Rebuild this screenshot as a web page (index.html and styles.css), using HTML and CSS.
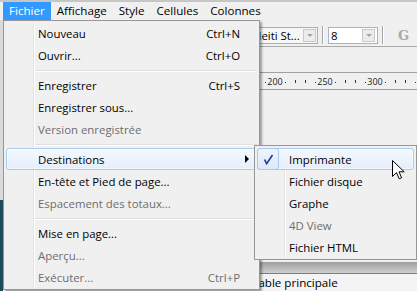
FILE: index.html
```html
<!DOCTYPE html>
<html lang="fr">
<head>
    <meta charset="UTF-8">
    <title>Fichier</title>
    <link rel="stylesheet" href="styles.css">
</head>
<body>
    <nav class="menubar">
        <span class="mb-item open">Fichier</span>
        <span class="mb-item">Affichage</span>
        <span class="mb-item">Style</span>
        <span class="mb-item">Cellules</span>
        <span class="mb-item">Colonnes</span>
    </nav>

    <div class="app">
        <div class="frame-left"></div>
        <div class="workspace">
            <div class="toolbar">
                <div class="combo combo-font">
                    <span class="combo-text">Heiti St...</span>
                    <span class="drop"></span>
                </div>
                <span class="tsep"></span>
                <div class="combo combo-size">
                    <span class="combo-text">8</span>
                    <span class="drop"></span>
                </div>
                <span class="tsep"></span>
                <span class="tbtn bold">G</span>
                <span class="tbtn italic">I</span>
            </div>

            <div class="ruler">
                <div class="rcell"><span class="dot"></span><span class="num">200</span><span class="dot"></span><span class="tick"></span><span class="tick"></span></div>
                <div class="rcell"><span class="dot"></span><span class="num">250</span><span class="dot"></span><span class="tick"></span><span class="tick"></span></div>
                <div class="rcell"><span class="dot"></span><span class="num">300</span><span class="dot"></span><span class="tick"></span><span class="tick"></span></div>
                <div class="rcell last"><span class="dot"></span></div>
            </div>

            <div class="canvas"></div>
            <div class="hscroll"></div>
            <div class="tabs"><span class="tab">Table principale</span></div>
        </div>
    </div>

    <!-- menu Fichier -->
    <div class="menu main-menu">
        <div class="mi"><span>Nouveau</span><span class="key">Ctrl+N</span></div>
        <div class="mi"><span>Ouvrir...</span><span class="key">Ctrl+O</span></div>
        <div class="msep"></div>
        <div class="mi"><span>Enregistrer</span><span class="key">Ctrl+S</span></div>
        <div class="mi"><span>Enregistrer sous...</span></div>
        <div class="mi off"><span>Version enregistrée</span></div>
        <div class="msep"></div>
        <div class="mi hot sub"><span>Destinations</span><span class="arrow"></span></div>
        <div class="mi"><span>En-tête et Pied de page...</span></div>
        <div class="mi off"><span>Espacement des totaux...</span></div>
        <div class="msep"></div>
        <div class="mi"><span>Mise en page...</span></div>
        <div class="mi off"><span>Aperçu...</span></div>
        <div class="mi off"><span>Exécuter...</span><span class="key">Ctrl+P</span></div>
    </div>

    <!-- sous-menu Destinations -->
    <div class="menu sub-menu">
        <div class="mi hot">
            <span class="check">
                <svg width="20" height="20" viewBox="0 0 20 20"><path d="M6.5 10.5 L8.6 14.6 L14.5 6" fill="none" stroke="#1c3d96" stroke-width="1.6"/></svg>
            </span>
            <span>Imprimante</span>
        </div>
        <div class="mi"><span>Fichier disque</span></div>
        <div class="mi"><span>Graphe</span></div>
        <div class="mi off"><span>4D View</span></div>
        <div class="mi"><span>Fichier HTML</span></div>
    </div>

    <svg class="cursor" width="13" height="20" viewBox="0 0 13 20">
        <path d="M0.5 0.5 L0.5 16.5 L4.5 12.6 L7.2 18.8 L9.6 17.8 L7 11.8 L12.2 11.8 Z" fill="#fff" stroke="#000" stroke-width="1"/>
    </svg>
</body>
</html>
```

FILE: styles.css
```css
body {
    margin: 0;
    width: 417px;
    height: 291px;
    overflow: hidden;
    position: relative;
    background: #f0f0f0;
    font-family: "Open Sans", "Noto Sans", sans-serif;
    font-size: 11.4px;
    color: #000;
}

/* barre de menus */
.menubar {
    display: flex;
    height: 18px;
    padding-left: 3px;
    border-top: 2px solid #c6c6c6;
    background: #f0f0f0;
}

.mb-item {
    padding: 0 6px;
    line-height: 18px;
    font-size: 11.6px;
    white-space: nowrap;
}

.mb-item.open {
    background: #3399ff;
    color: #fff;
}

/* fenêtre derrière le menu */
.app {
    display: flex;
    height: 271px;
}

.frame-left {
    width: 3px;
    background: linear-gradient(#dadada 0, #dadada 180px, #1d4d5a 180px);
}

.workspace {
    flex: 1;
    display: flex;
    flex-direction: column;
    min-width: 0;
}

.toolbar {
    display: flex;
    align-items: center;
    height: 27px;
    box-sizing: border-box;
    padding: 4px 0 0 247px;
    border-bottom: 1px solid #a9a9a9;
    overflow: hidden;
}

.combo {
    display: flex;
    align-items: center;
    flex-shrink: 0;
    height: 17px;
    box-sizing: border-box;
    border: 1px solid #abadb3;
    background: #f7f7f7;
}

.combo-font {
    width: 68px;
}

.combo-size {
    width: 50px;
    background: #fff;
    border-color: #a3b3cc;
}

.combo-text {
    flex: 1;
    padding-left: 2px;
    white-space: nowrap;
    overflow: hidden;
}

.drop {
    position: relative;
    width: 13px;
    height: 13px;
    margin-right: 1px;
    box-sizing: border-box;
    border: 1px solid #c9c9c9;
    background: #ececec;
}

.drop::after {
    content: "";
    position: absolute;
    left: 3px;
    top: 4px;
    border-top: 3px solid #a4a4a4;
    border-left: 3px solid transparent;
    border-right: 3px solid transparent;
}

.combo-size .drop {
    margin-right: 2px;
}

.tsep {
    flex-shrink: 0;
    width: 1px;
    height: 18px;
    margin: 0 4px;
    background: #a7a7a7;
    border-right: 1px solid #fff;
}

.tbtn {
    color: #a9a9a9;
    font-size: 13px;
}

.tbtn.bold {
    margin-left: 10px;
    font-family: "DejaVu Serif", serif;
    font-weight: bold;
}

.tbtn.italic {
    margin-left: 10px;
    font-family: "DejaVu Serif", serif;
    font-style: italic;
}

/* règle */
.ruler {
    display: flex;
    height: 18px;
    box-sizing: border-box;
    margin-top: 25px;
    padding-left: 257px;
    border-top: 1px solid #a0a0a0;
    border-bottom: 1px solid #a0a0a0;
    font-size: 9px;
    color: #222;
    overflow: hidden;
}

.rcell {
    display: flex;
    flex-shrink: 0;
    width: 50px;
}

.rcell.last {
    width: 10px;
}

.rcell > span {
    display: flex;
    justify-content: center;
    align-items: center;
    width: 10px;
}

.dot::before {
    content: "";
    width: 1px;
    height: 1px;
    margin-top: 2px;
    background: #333;
}

.tick::before {
    content: "";
    width: 1px;
    height: 3px;
    margin-top: 1px;
    background: #333;
}

.num {
    white-space: nowrap;
}

.canvas {
    flex: 1;
}

.hscroll {
    height: 11px;
    background: linear-gradient(#9e9e9e, #cfcfcf);
    border-bottom: 1px solid #7d7d7d;
}

.tabs {
    height: 17px;
    padding-left: 249px;
    background: #f4f4f4;
}

.tab {
    line-height: 17px;
    font-size: 11.6px;
    white-space: nowrap;
}

/* menus déroulants */
.menu {
    position: absolute;
    box-sizing: border-box;
    border: 1px solid #979797;
    background: #f0f0f0;
    box-shadow: 2px 2px 2px rgba(0, 0, 0, 0.35);
}

.menu::before {
    content: "";
    position: absolute;
    left: 29px;
    top: 1px;
    bottom: 1px;
    width: 1px;
    background: #e2e3e3;
    border-right: 1px solid #fff;
}

.main-menu {
    left: 3px;
    top: 20px;
    width: 257px;
    padding: 1px 2px;
}

.sub-menu {
    left: 254px;
    top: 145px;
    width: 163px;
    padding: 2px 2px 1px;
    box-shadow: none;
}

.mi {
    position: relative;
    display: flex;
    align-items: center;
    height: 22px;
    box-sizing: border-box;
    padding: 0 16px 0 31px;
    border: 1px solid transparent;
    border-radius: 3px;
    white-space: nowrap;
}

.mi .key {
    margin-left: auto;
}

.mi.off {
    color: #6d6d6d;
}

.mi.hot {
    border-color: #a8c9f0;
    background: linear-gradient(#f4f8fe, #e4eefb);
    box-shadow: inset 0 0 0 1px rgba(255, 255, 255, 0.5);
}

.arrow {
    position: absolute;
    right: 7px;
    top: 6px;
    border-left: 4px solid #000;
    border-top: 4px solid transparent;
    border-bottom: 4px solid transparent;
}

.check {
    position: absolute;
    left: -1px;
    top: -1px;
    width: 22px;
    height: 22px;
    box-sizing: border-box;
    border: 1px solid #a8c9f0;
    border-radius: 3px;
    background: linear-gradient(#eef4fd, #dde9fa);
}

.check svg {
    display: block;
}

.msep {
    position: relative;
    height: 8px;
}

.msep::after {
    content: "";
    position: absolute;
    left: 29px;
    right: 0;
    top: 4px;
    height: 0;
    border-top: 1px solid #e0e0e0;
    border-bottom: 1px solid #fff;
}

.cursor {
    position: absolute;
    left: 392px;
    top: 160px;
}
```
